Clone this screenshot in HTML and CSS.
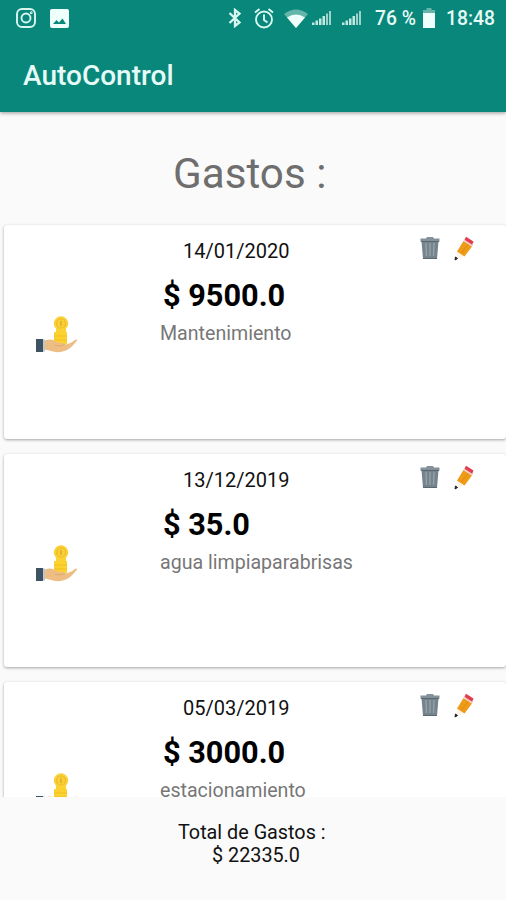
FILE: index.html
```html
<!DOCTYPE html>
<html lang="es">
<head>
    <meta charset="UTF-8">
    <meta name="viewport" content="width=device-width, initial-scale=1.0">
    <title>AutoControl</title>
    <link rel="stylesheet" href="styles.css">
</head>
<body>

    <svg class="sprite" width="0" height="0">
        <symbol id="hand" viewBox="0 0 44 38">
            <path d="M1 23h7v13H1z" fill="#3d5263"/>
            <path d="M8 23.500h2v12H8z" fill="#bcc8ce"/>
            <path d="M19 16h13v12H19z" fill="#fbd22f"/>
            <path d="M19 20h13M19 24h13" stroke="#f3c021" stroke-width="1"/>
            <circle cx="26" cy="7.500" r="7.200" fill="#f9d137"/>
            <circle cx="26" cy="7.500" r="4.500" fill="none" stroke="#edbb2c" stroke-width="1.200"/>
            <path d="M26 5v5" stroke="#dfa826" stroke-width="1.400"/>
            <path d="M21 13h10v4H21z" fill="#fbd22f"/>
            <path d="M10 24.500q5-2 9 0l4 2q6 0 7 2 6-1 9-4 4-2 3 0-6 8-11 10-7 3-13 1l-8-2z" fill="#edbd83"/>
            <path d="M20 29.500q6 1 10-1" fill="none" stroke="#dfa96f" stroke-width="1"/>
        </symbol>
        <symbol id="trash" viewBox="0 0 22 24">
            <path d="M2.500 5h17l-1.500 18H4z" fill="#75838c"/>
            <path d="M7 7l.5 13M11 7v13M15 7l-.5 13" stroke="#97a4ab" stroke-width="1.300"/>
            <path d="M8 1h6l1 1.500h5.500v3h-19v-3H7z" fill="#84919a"/>
            <path d="M2 5.500h18M4 22.500h14" stroke="#596872" stroke-width="1"/>
        </symbol>
        <symbol id="pencil" viewBox="0 0 22 26">
            <path d="M4 15l7 5-8 4z" fill="#fdf3e6"/>
            <path d="M10.500 5l8.500 5.500-7.500 10-7.500-5z" fill="#ee9b19"/>
            <path d="M15 8.500L8.500 17" stroke="#e58e0e" stroke-width="1.200"/>
            <path d="M10.500 5l1-1.500 8.500 5.500-1 1.500z" fill="#f3c9c4"/>
            <path d="M11.500 3.700L13 .8l7.500 4.700-1.300 3.200z" fill="#e33c4c"/>
            <path d="M2.500 21l2 1.500-2.500 1.500z" fill="#202124" stroke="#202124"/>
        </symbol>
        <symbol id="signal" viewBox="0 0 20 16">
            <path d="M0 15v-2.500h2.500V15zM3.500 15v-4.500H6V15zM7 15V8.500h2.500V15zM10.500 15V6H13v9z" fill="#c3e8e1"/>
            <path d="M14 15V3.500h2V15zM17 15V1h2v14z" fill="#9dd3ca"/>
        </symbol>
    </svg>

    <div class="screen">
        <header class="header">
            <div class="status">
                <svg class="ic-insta" width="20" height="20" viewBox="0 0 20 20" fill="none" stroke="#d9f7f1" stroke-width="1.900">
                    <rect x="1" y="1" width="18" height="18" rx="5"/>
                    <circle cx="10" cy="10" r="4.500"/>
                    <circle cx="15.200" cy="4.800" r=".5"/>
                </svg>
                <svg class="ic-image" width="19" height="19" viewBox="0 0 19 19">
                    <rect width="19" height="19" rx="2" fill="#effffc"/>
                    <path d="M3 15l3.500-4 2.500 2.500 3.500-4 3.500 5.500z" fill="#09877a"/>
                </svg>
                <svg class="ic-bt" width="14" height="20" viewBox="0 0 14 20" fill="none" stroke="#d9f7f1" stroke-width="2.300">
                    <path d="M1.500 5l10 9.500L7 18v-16l4.500 3.500L1.500 15"/>
                </svg>
                <svg class="ic-alarm" width="20" height="21" viewBox="0 0 20 21" fill="none" stroke="#d9f7f1" stroke-width="1.900">
                    <circle cx="10" cy="11.500" r="8"/>
                    <path d="M10 6.500V12l3.500 2.500M1 4.500L5.500 1M19 4.500L14.500 1"/>
                </svg>
                <svg class="ic-wifi" width="24" height="19" viewBox="0 0 24 19">
                    <path d="M0 5Q12-4 24 5L12 19z" fill="#65b5aa"/>
                    <path d="M3 8.500Q12 2.500 21 8.500L12 19z" fill="#effffc"/>
                </svg>
                <svg class="ic-signal" width="20" height="16"><use href="#signal"/></svg>
                <svg class="ic-signal2" width="20" height="16"><use href="#signal"/></svg>
                <span class="percent">76 %</span>
                <svg class="ic-battery" width="12" height="20" viewBox="0 0 12 20">
                    <path d="M3.500 0h5v2H12v5H0V2h3.500z" fill="#65b5aa"/>
                    <path d="M0 5h12v15H0z" fill="#effffc"/>
                </svg>
                <span class="clock">18:48</span>
            </div>
            <h1 class="app-name">AutoControl</h1>
        </header>

        <h2 class="title">Gastos :</h2>

        <main class="list">
            <article class="card">
                <svg class="hand" width="44" height="38"><use href="#hand"/></svg>
                <div class="info">
                    <div class="date">14/01/2020</div>
                    <div class="amount">$ 9500.0</div>
                    <div class="detail">Mantenimiento</div>
                </div>
                <div class="actions">
                    <svg width="22" height="24"><use href="#trash"/></svg>
                    <svg width="22" height="26"><use href="#pencil"/></svg>
                </div>
            </article>
            <article class="card">
                <svg class="hand" width="44" height="38"><use href="#hand"/></svg>
                <div class="info">
                    <div class="date">13/12/2019</div>
                    <div class="amount">$ 35.0</div>
                    <div class="detail">agua limpiaparabrisas</div>
                </div>
                <div class="actions">
                    <svg width="22" height="24"><use href="#trash"/></svg>
                    <svg width="22" height="26"><use href="#pencil"/></svg>
                </div>
            </article>
            <article class="card">
                <svg class="hand" width="44" height="38"><use href="#hand"/></svg>
                <div class="info">
                    <div class="date">05/03/2019</div>
                    <div class="amount">$ 3000.0</div>
                    <div class="detail">estacionamiento</div>
                </div>
                <div class="actions">
                    <svg width="22" height="24"><use href="#trash"/></svg>
                    <svg width="22" height="26"><use href="#pencil"/></svg>
                </div>
            </article>
        </main>

        <footer class="total">
            <div class="total-label">Total de Gastos :</div>
            <div class="total-value">$ 22335.0</div>
        </footer>
    </div>

</body>
</html>
```
FILE: styles.css
```css
body {
    margin: 0;
    font-family: Roboto, sans-serif;
    background: #fafafa;
    color: #111;
}
svg {
    display: block;
    flex-shrink: 0;
}
.sprite {
    display: none;
}
.screen {
    display: flex;
    flex-direction: column;
    height: 900px;
    overflow: hidden;
}

/* header */
.header {
    height: 112px;
    flex-shrink: 0;
    background: #09877a;
    box-shadow: 0 1px 4px rgba(0, 0, 0, 0.4);
}
.status {
    display: flex;
    align-items: center;
    height: 36px;
    padding-left: 16px;
    color: #e6fbf7;
    font-size: 19.3px;
    font-weight: 500;
    white-space: nowrap;
}
.ic-image {
    margin-left: 14px;
}
.ic-bt {
    margin-left: 159px;
}
.ic-alarm {
    margin-left: 12px;
}
.ic-wifi {
    margin-left: 10px;
}
.ic-signal {
    margin-left: 4px;
}
.ic-signal2 {
    margin-left: 10px;
}
.percent {
    width: 41px;
    margin-left: 13px;
}
.ic-battery {
    margin-left: 7px;
}
.clock {
    margin-left: 11px;
}
.app-name {
    margin: 0;
    padding: 24px 0 0 23px;
    font-size: 28px;
    line-height: 32px;
    font-weight: 500;
    color: #e6fbf7;
}

.title {
    height: 113px;
    margin: 0;
    padding-left: 173px;
    flex-shrink: 0;
    font-size: 42.2px;
    line-height: 123px;
    font-weight: 400;
    color: #6e6e6e;
}

/* list */
.list {
    display: flex;
    flex-direction: column;
    gap: 15px;
    box-sizing: border-box;
    height: 578px;
    flex-shrink: 0;
    margin-top: -6px;
    padding: 6px 0 0 4px;
    overflow: hidden;
}
.card {
    display: flex;
    height: 213.5px;
    flex-shrink: 0;
    background: #fff;
    border-radius: 3px;
    box-shadow: 0 1px 3px rgba(0, 0, 0, 0.35);
}
.hand {
    margin: 91px 0 0 31px;
}
.info {
    width: 259px;
    padding: 14px 0 0 81px;
    white-space: nowrap;
}
.date {
    padding-left: 23px;
    font-size: 20px;
    line-height: 24px;
}
.amount {
    margin-top: 15px;
    padding-left: 3px;
    font-size: 30.7px;
    line-height: 36px;
    font-weight: 700;
    color: #000;
}
.detail {
    margin-top: 8px;
    font-size: 19.6px;
    line-height: 24px;
    color: #777;
}
.actions {
    display: flex;
    gap: 12px;
    padding-top: 11px;
}

/* total */
.total {
    padding-top: 24px;
    font-size: 19.8px;
    line-height: 23px;
}
.total-label {
    padding-left: 178px;
}
.total-value {
    padding-left: 212px;
}
```
